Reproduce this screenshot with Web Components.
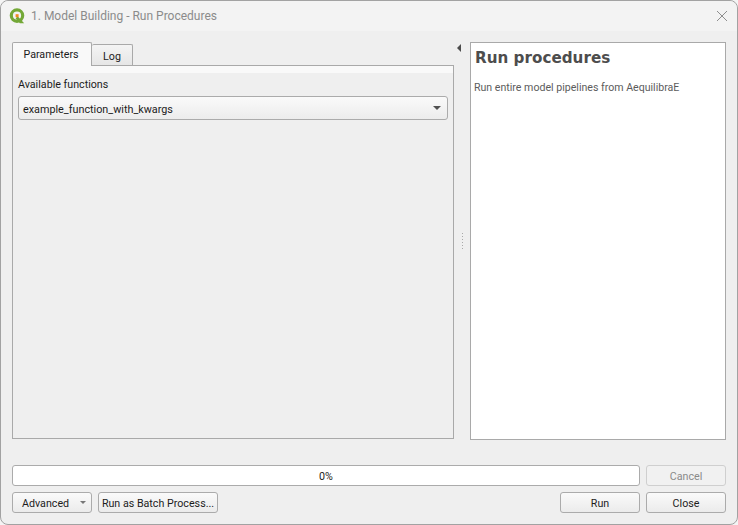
<!DOCTYPE html>
<html>
<head>
<meta charset="utf-8">
<style>
  html, body { margin: 0; padding: 0; background: #f4f4f4; }
  body { width: 738px; height: 525px; overflow: hidden; font-family: Roboto, "Noto Sans", sans-serif; font-size: 10.7px; color: #1c1c1c; }
</style>
</head>
<body>
<qgis-dialog title="1. Model Building - Run Procedures">
  <tab-pane slot="left">
    <span class="lbl" slot="label">Available functions</span>
    <combo-box slot="combo">example_function_with_kwargs</combo-box>
  </tab-pane>
  <help-panel slot="right" heading="Run procedures">Run entire model pipelines from AequilibraE</help-panel>
  <progress-row slot="progress"></progress-row>
  <flat-button slot="advanced" menu style="width:80px">Advanced</flat-button>
  <flat-button slot="batch" style="width:120px">Run as Batch Process...</flat-button>
  <flat-button slot="run" style="width:80px">Run</flat-button>
  <flat-button slot="close" style="width:80px">Close</flat-button>
</qgis-dialog>

<script>
class QgisDialog extends HTMLElement {
  connectedCallback() {
    this.attachShadow({ mode: 'open' });
    this.shadowRoot.innerHTML = `
      <style>
        :host { display: block; width: 738px; height: 525px; }
        .win {
          box-sizing: border-box; width: 738px; height: 525px;
          background: #efefef;
          border: 1px solid #a2a2a2;
          border-radius: 8px;
          display: flex; flex-direction: column;
        }
        .titlebar {
          height: 30px; flex: none; background: #f3f3f3; border-radius: 8px 8px 0 0;
          display: flex; align-items: center; padding: 0 10px 0 8px; gap: 5px;
          color: #8b8b8b; font-size: 12px;
        }
        .titlebar .t { flex: 1; }
        .main { height: 398px; flex: none; margin-top: 11px; padding: 0 11px; display: flex; }
        .left { width: 442px; flex: none; }
        .splitter { width: 16px; flex: none; position: relative; display: flex; align-items: center; justify-content: center; }
        .arrow { position: absolute; left: 3px; top: 2px; width: 0; height: 0; border: 4px solid transparent; border-left: 0; border-right: 4px solid #4c4c4c; }
        .dots { display: grid; gap: 2px; }
        .dots i { width: 1px; height: 1px; background: #a9a9a9; display: block; }
        .right { width: 256px; flex: none; }
        .foot { padding: 25px 11px 0; display: flex; flex-direction: column; gap: 6px; }
        .row { display: flex; gap: 6px; }
        .spacer { flex: 1; }
      </style>
      <div class="win">
        <div class="titlebar">
          <svg width="17" height="17" viewBox="0 0 17 17">
            <circle cx="8" cy="7.6" r="5.7" fill="none" stroke="#73a837" stroke-width="3.2"/>
            <path d="M8.6 8.2l6.6 7h-4.3L6.6 10.6z" fill="#73a837"/>
            <rect x="6.6" y="6.2" width="3" height="3" fill="#ee8a1c"/>
          </svg>
          <span class="t"></span>
          <svg width="10" height="10" viewBox="0 0 10 10"><path d="M0 0l10 10M10 0L0 10" stroke="#8e8e8e" stroke-width="1" fill="none"/></svg>
        </div>
        <div class="main">
          <div class="left"><slot name="left"></slot></div>
          <div class="splitter">
            <span class="arrow"></span>
            <span class="dots"><i></i><i></i><i></i><i></i><i></i><i></i></span>
          </div>
          <div class="right"><slot name="right"></slot></div>
        </div>
        <div class="foot">
          <div class="row"><slot name="progress"></slot></div>
          <div class="row">
            <slot name="advanced"></slot><slot name="batch"></slot>
            <span class="spacer"></span>
            <slot name="run"></slot><slot name="close"></slot>
          </div>
        </div>
      </div>
    `;
    this.shadowRoot.querySelector('.t').textContent = this.getAttribute('title');
  }
}

class TabPane extends HTMLElement {
  connectedCallback() {
    this.attachShadow({ mode: 'open' });
    this.shadowRoot.innerHTML = `
      <style>
        :host { display: flex; flex-direction: column; height: 397px; }
        .tabs { display: flex; align-items: flex-end; height: 23px; flex: none; position: relative; z-index: 1; }
        .tab { box-sizing: border-box; border: 1px solid #a9a9a9; border-bottom: 0; display: flex; align-items: center; justify-content: center; }
        .on { width: 80px; height: 24px; margin-bottom: -1px; background: #f9f9f9; border-radius: 2px 2px 0 0; padding-right: 2px; }
        .off { width: 41px; height: 21px; background: linear-gradient(#f4f4f4, #e6e6e6); border-radius: 2px 2px 0 0; border-left: 0; padding-top: 3px; }
        .pane {
          flex: 1; box-sizing: border-box; border: 1px solid #a9a9a9; padding: 11px 5px 0;
          background: linear-gradient(#f9f9f9 0, #f9f9f9 7px, #efefef 7px);
          display: flex; flex-direction: column; gap: 4px;
        }
        ::slotted(.lbl) { display: block; line-height: 15px; }
      </style>
      <div class="tabs"><div class="tab on">Parameters</div><div class="tab off">Log</div></div>
      <div class="pane"><slot name="label"></slot><slot name="combo"></slot></div>
    `;
  }
}

class ComboBox extends HTMLElement {
  connectedCallback() {
    this.attachShadow({ mode: 'open' });
    this.shadowRoot.innerHTML = `
      <style>
        :host { display: block; }
        .box {
          box-sizing: border-box; height: 24px; border: 1px solid #ababab; border-radius: 3px;
          background: linear-gradient(#fafafa, #ececec);
          display: flex; align-items: center; padding: 2px 6px 0 4px; font-size: 10.8px;
        }
        .txt { flex: 1; }
        .caret { width: 0; height: 0; margin-top: -2px; border: 4px solid transparent; border-bottom: 0; border-top: 4px solid #505050; }
      </style>
      <div class="box"><span class="txt"><slot></slot></span><span class="caret"></span></div>
    `;
  }
}

class HelpPanel extends HTMLElement {
  connectedCallback() {
    this.attachShadow({ mode: 'open' });
    this.shadowRoot.innerHTML = `
      <style>
        :host { display: block; box-sizing: border-box; height: 398px; background: #fff; border: 1px solid #a9a9a9; padding: 4px 3px; color: #4d4d4d; }
        h3 { margin: 0 0 0 1px; font-size: 15.2px; line-height: 22px; font-weight: 700; font-family: "DejaVu Sans", sans-serif; }
        p { margin: 11px 0 0; font-size: 10.6px; line-height: 15px; color: #5c5c5c; }
      </style>
      <h3></h3>
      <p><slot></slot></p>
    `;
    this.shadowRoot.querySelector('h3').textContent = this.getAttribute('heading');
  }
}

class ProgressRow extends HTMLElement {
  connectedCallback() {
    this.attachShadow({ mode: 'open' });
    this.shadowRoot.innerHTML = `
      <style>
        :host { display: flex; gap: 6px; width: 714px; }
        .bar {
          box-sizing: border-box; width: 628px; height: 21px; background: #fff; padding-top: 2px;
          border: 1px solid #ababab; border-radius: 3px;
          display: flex; align-items: center; justify-content: center;
        }
        .cancel {
          box-sizing: border-box; width: 80px; height: 21px; border: 1px solid #cfcfcf; border-radius: 3px;
          background: #f1f1f1; color: #8a8a8a; padding-top: 2px;
          display: flex; align-items: center; justify-content: center;
        }
      </style>
      <div class="bar">0%</div>
      <div class="cancel">Cancel</div>
    `;
  }
}

class FlatButton extends HTMLElement {
  connectedCallback() {
    this.attachShadow({ mode: 'open' });
    const menu = this.hasAttribute('menu');
    this.shadowRoot.innerHTML = `
      <style>
        :host { display: block; }
        .btn {
          box-sizing: border-box; height: 21px; border: 1px solid #ababab; border-radius: 3px;
          background: linear-gradient(#fafafa, #ebebeb); padding-top: 2px;
          display: flex; align-items: center; justify-content: center; white-space: nowrap;
        }
        .btn.menu { justify-content: space-between; padding: 2px 5px 0 9px; }
        .caret { width: 0; height: 0; margin-top: -2px; border: 3px solid transparent; border-bottom: 0; border-top: 3px solid #777; }
      </style>
      <div class="btn ${menu ? 'menu' : ''}"><span><slot></slot></span>${menu ? '<span class="caret"></span>' : ''}</div>
    `;
  }
}

customElements.define('qgis-dialog', QgisDialog);
customElements.define('tab-pane', TabPane);
customElements.define('combo-box', ComboBox);
customElements.define('help-panel', HelpPanel);
customElements.define('progress-row', ProgressRow);
customElements.define('flat-button', FlatButton);
</script>
</body>
</html>
